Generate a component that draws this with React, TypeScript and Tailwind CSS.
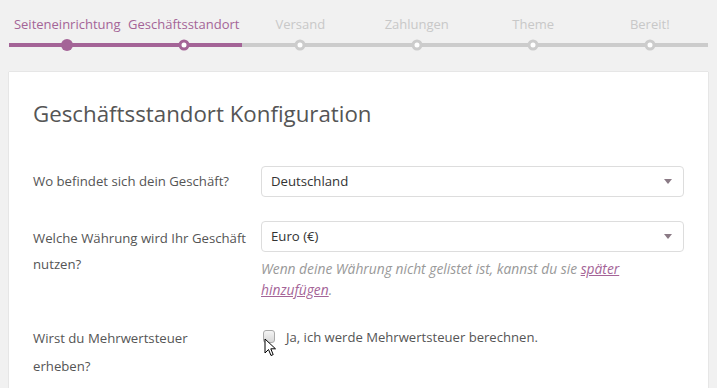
import React from 'react';

const steps = ['Seiteneinrichtung', 'Geschäftsstandort', 'Versand', 'Zahlungen', 'Theme', 'Bereit!'];
const activeIndex = 1;

const Stepper: React.FC = () => {
  return (
    <div className="flex px-[9px] pt-[15px]">
      {steps.map((step, index) => {
        const done = index < activeIndex;
        const active = index === activeIndex;
        const reached = done || active;
        return (
          <div key={step} className="flex-1 flex flex-col items-center">
            <span className={`text-[13px] leading-[18px] ${reached ? 'text-[#a46497]' : 'text-[#c8c8c8]'}`}>
              {step}
            </span>
            <div className={`relative w-full h-[4px] mt-[10px] ${reached ? 'bg-[#a46497]' : 'bg-[#cccccc]'}`}>
              {done ? (
                <span className="absolute left-1/2 top-1/2 -translate-x-1/2 -translate-y-1/2 w-[12px] h-[12px] rounded-full bg-[#a46497]" />
              ) : (
                <span
                  className={`absolute left-1/2 top-1/2 -translate-x-1/2 -translate-y-1/2 w-[11px] h-[11px] rounded-full bg-white border-[3px] ${
                    active ? 'border-[#a46497]' : 'border-[#cccccc]'
                  }`}
                />
              )}
            </div>
          </div>
        );
      })}
    </div>
  );
};

const SelectBox: React.FC<{ value: string }> = ({ value }) => (
  <div className="flex items-center justify-between h-[31px] border border-[#dddddd] rounded-[4px] bg-white pl-[9px] pr-[11px]">
    <span className="text-[13.2px] text-[#333333]">{value}</span>
    <span className="w-0 h-0 border-l-[4px] border-r-[4px] border-t-[5px] border-l-transparent border-r-transparent border-t-[#8a7a85]" />
  </div>
);

export default function App() {
  return (
    <div className="min-h-screen bg-[#f1f1f1] font-['Open_Sans',sans-serif] overflow-hidden">
      <Stepper />
      <div className="mx-[9px] mt-[25px] bg-white shadow-[0_0_1px_rgba(0,0,0,0.25)] px-[24px] pt-[28px] pb-[20px]">
        <h1 className="text-[22.3px] leading-[28px] text-[#555555]">Geschäftsstandort Konfiguration</h1>

        <div className="mt-[38px] grid grid-cols-[228px_1fr] gap-y-[24px] text-[13.2px] text-[#555555]">
          <div className="leading-[26px] pt-[2px]">Wo befindet sich dein Geschäft?</div>
          <SelectBox value="Deutschland" />

          <div className="leading-[26px] pt-[4px]">Welche Währung wird Ihr Geschäft nutzen?</div>
          <div>
            <SelectBox value="Euro (€)" />
            <p className="mt-[6px] italic text-[13.8px] leading-[21px] text-[#999999]">
              Wenn deine Währung nicht gelistet ist, kannst du sie{' '}
              <a href="#" className="text-[#a46497] underline">später</a>
              <br />
              <a href="#" className="text-[#a46497] underline">hinzufügen</a>.
            </p>
          </div>

          <div className="leading-[28px] w-[170px]">Wirst du Mehrwertsteuer erheben?</div>
          <div className="relative flex items-start pt-[6px]">
            <span className="ml-[2px] w-[12px] h-[13px] rounded-[3px] border border-[#aaaaaa] bg-gradient-to-b from-[#f4f4f4] to-[#d8d8d8]" />
            <span className="ml-[11px] text-[13.1px] leading-[14px] text-[#555555]">Ja, ich werde Mehrwertsteuer berechnen.</span>
            <svg className="absolute left-[3px] top-[14px]" width="13" height="20" viewBox="0 0 13 20">
              <path d="M1 1 L1 15 L4.5 11.5 L7 17.5 L9.2 16.6 L6.8 10.8 L11.5 10.8 Z" fill="#ffffff" stroke="#000000" strokeWidth="1" strokeLinejoin="miter" />
            </svg>
          </div>
        </div>
      </div>
    </div>
  );
}
